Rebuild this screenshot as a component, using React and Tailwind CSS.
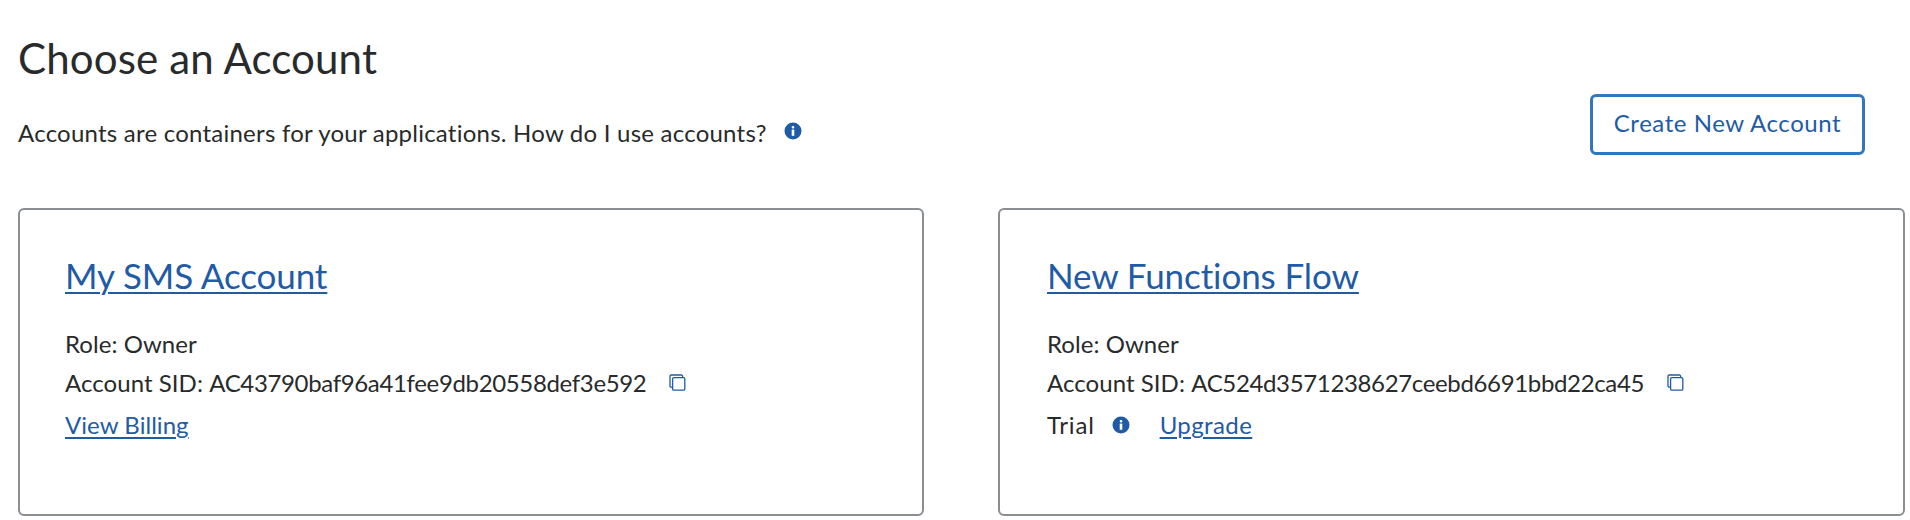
const Info = ({ className = "" }) => (
  <svg viewBox="0 0 18 18" className={`w-[18px] h-[18px] ${className}`}>
    <circle cx="9" cy="9" r="8.5" fill="#1f5ba6" />
    <rect x="7.7" y="7.6" width="2.6" height="6.2" fill="#fff" />
    <rect x="7.7" y="4.1" width="2.6" height="2.4" rx="1.1" fill="#fff" />
  </svg>
);

const Copy = () => (
  <svg viewBox="0 0 17 17" fill="none" stroke="#1f5ba6" strokeWidth="1.3" className="w-[17px] h-[17px]">
    <rect x="3.6" y="3.6" width="12.2" height="12.6" rx="1.2" />
    <path d="M3 13.2H2.2a1.2 1.2 0 0 1-1.2-1.2V2.2A1.2 1.2 0 0 1 2.2 1h10.2a1.2 1.2 0 0 1 1.2 1.2v1" />
  </svg>
);

const linkClass = "text-[#1f5ba6] underline decoration-2 underline-offset-[3px]";

const Card = ({ title, sid, children, className = "" }) => (
  <div className={`h-[308px] border-2 border-[#8a8d91] rounded-[6px] bg-white pt-[42px] ${className}`}>
    <a className={`block text-[35px] leading-[46px] tracking-[-0.1px] ${linkClass}`}>{title}</a>
    <div className="mt-[26px] text-[24px] tracking-[0.05px] leading-[39px] text-[#282a2b]">
      <div>Role: Owner</div>
      <div className="flex items-center">
        <span>Account SID: <span className="tracking-[-0.35px]">{sid}</span></span>
        <span className="ml-[23px]"><Copy /></span>
      </div>
      <div className="mt-[3px]">{children}</div>
    </div>
  </div>
);

export default function App() {
  return (
    <div className="w-[1910px] h-[520px] overflow-hidden bg-white font-['Lato','Liberation_Sans',sans-serif] text-[#282a2b]">
      <div className="pl-[18px] pt-[33px]">
        <h1 className="text-[42px] leading-[50px] font-normal tracking-[0.15px]">Choose an Account</h1>
        <div className="flex items-start justify-between h-[61px] mt-[11px] pr-[45px]">
          <div className="flex items-center text-[24px] tracking-[0.23px] leading-[32px] pt-[23px]">
            <span>Accounts are containers for your applications. How do I use accounts?</span>
            <Info className="ml-[17px] -mt-[4px]" />
          </div>
          <button className="w-[275px] h-[61px] pb-[3px] rounded-[6px] border-[3px] border-[#2f78bd] text-[#1f5ba6] text-[24px] tracking-[0.55px]">Create New Account</button>
        </div>
        <div className="flex mt-[53px] gap-[74px]">
          <Card title="My SMS Account" sid="AC43790baf96a41fee9db20558def3e592" className="w-[906px] pl-[45px]">
            <a className={`block ${linkClass} w-fit`}>View Billing</a>
          </Card>
          <Card title="New Functions Flow" sid="AC524d3571238627ceebd6691bbd22ca45" className="w-[907px] pl-[47px]">
            <div className="flex items-center">
              <span className="tracking-[0.8px]">Trial</span>
              <Info className="ml-[17px]" />
              <a className={`ml-[30px] tracking-[0.4px] ${linkClass}`}>Upgrade</a>
            </div>
          </Card>
        </div>
      </div>
    </div>
  );
}
